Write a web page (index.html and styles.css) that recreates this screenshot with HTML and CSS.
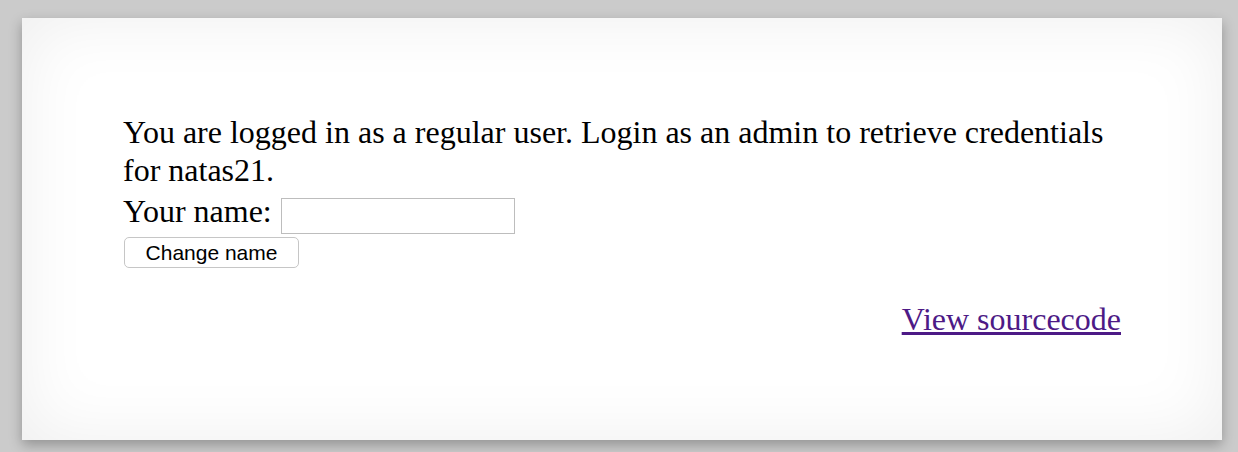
FILE: index.html
```html
<!DOCTYPE html>
<html>
<head>
<meta charset="utf-8">
<link rel="stylesheet" href="styles.css">
</head>
<body>
<div class="content">
  <div class="message">You are logged in as a regular user. Login as an admin to retrieve credentials for natas21.</div>
  <form class="name-form">
    <div class="name-row"><span class="name-label">Your name:</span><input class="name-input" name="name" value=""></div>
    <div class="btn-row"><button type="button" class="change-btn">Change name</button></div>
  </form>
  <div class="viewsource"><a class="source-link" href="#">View sourcecode</a></div>
</div>
</body>
</html>
```
FILE: styles.css
```css
html, body {
  margin: 0;
  padding: 0;
  background: #cbcbcb;
}
body {
  padding: 18px 16px 12px 22px;
  font-family: "Liberation Serif", "Times New Roman", serif;
  font-size: 32px;
  line-height: 38px;
  color: #000;
}
.content {
  box-sizing: border-box;
  width: 1200px;
  height: 422px;
  padding: 95px 101px 0 101px;
  background: #fff;
  box-shadow: inset 0 0 70px rgba(0, 0, 0, 0.07), 0 5px 12px rgba(0, 0, 0, 0.28);
}
.name-form {
  margin: 0;
}
.name-row {
  display: flex;
  align-items: flex-start;
}
.name-label {
  margin-top: 3px;
}
.name-input {
  box-sizing: border-box;
  width: 234px;
  height: 36px;
  margin: 9px 0 0 9px;
  border: 1px solid #bdbdbd;
  padding: 0 4px;
  font-size: 16px;
  font-family: "Liberation Sans", Arial, sans-serif;
}
.btn-row {
  display: flex;
  padding-top: 3px;
}
.change-btn {
  box-sizing: border-box;
  height: 31px;
  width: 175px;
  margin: 0 0 0 1px;
  padding: 0;
  border: 1px solid #c6c6c6;
  border-radius: 5px;
  background: #fff;
  font-family: "Liberation Sans", Arial, sans-serif;
  font-size: 21px;
  line-height: 29px;
  color: #000;
}
.viewsource {
  margin-top: 32px;
  text-align: right;
}
.source-link {
  color: #4d1a86;
  text-decoration: underline;
}
```
